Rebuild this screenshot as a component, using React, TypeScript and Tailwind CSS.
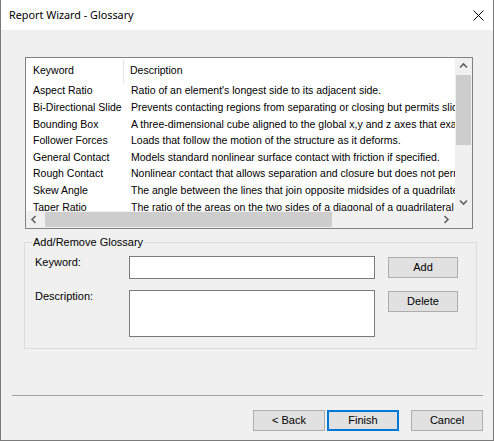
import React from "react";

const rows: [string, string][] = [
  ["Aspect Ratio", "Ratio of an element's longest side to its adjacent side."],
  ["Bi-Directional Slide", "Prevents contacting regions from separating or closing but permits sliding along the contact surface."],
  ["Bounding Box", "A three-dimensional cube aligned to the global x,y and z axes that exactly encloses the model."],
  ["Follower Forces", "Loads that follow the motion of the structure as it deforms."],
  ["General Contact", "Models standard nonlinear surface contact with friction if specified."],
  ["Rough Contact", "Nonlinear contact that allows separation and closure but does not permit sliding."],
  ["Skew Angle", "The angle between the lines that join opposite midsides of a quadrilateral element."],
  ["Taper Ratio", "The ratio of the areas on the two sides of a diagonal of a quadrilateral formed by the element."],
];

function Chevron({ dir }: { dir: "up" | "down" | "left" | "right" }) {
  const pts =
    dir === "up"
      ? "1,5.5 4.5,2 8,5.5"
      : dir === "down"
      ? "1,2.5 4.5,6 8,2.5"
      : dir === "left"
      ? "5.5,1 2,4.5 5.5,8"
      : "2.5,1 6,4.5 2.5,8";
  return (
    <svg width="9" height="9" viewBox="0 0 9 9">
      <polyline points={pts} fill="none" stroke="#606060" strokeWidth="1.6" />
    </svg>
  );
}

function Btn({ children, primary }: { children: React.ReactNode; primary?: boolean }) {
  return (
    <div
      className={
        "w-[72px] h-[21px] flex items-center justify-center bg-[#e1e1e1] text-black text-[11px] " +
        (primary ? "border-2 border-[#0078d7]" : "border border-[#adadad]")
      }
    >
      {children}
    </div>
  );
}

export default function App() {
  return (
    <div
      className="w-[494px] h-[441px] flex flex-col bg-[#f0f0f0] border-x border-b border-[#7a7a7a] overflow-hidden text-black"
      style={{ fontFamily: '"Liberation Sans", Arial, sans-serif' }}
    >
      <div className="h-[30px] shrink-0 bg-white flex items-center justify-between pl-[8px] pr-[9px]">
        <span className="text-[10.8px]" style={{ fontFamily: '"Noto Sans", sans-serif' }}>
          Report Wizard - Glossary
        </span>
        <svg width="11" height="11" viewBox="0 0 11 11">
          <path d="M0.5 0.5 L10.5 10.5 M10.5 0.5 L0.5 10.5" stroke="#000" strokeWidth="1" />
        </svg>
      </div>

      <div className="flex-1 flex flex-col">
        {/* List view */}
        <div className="mt-[27px] ml-[24px] w-[448px] h-[172px] border border-[#828282] bg-white flex flex-col">
          <div className="flex h-[153px]">
            <div className="w-[429px] overflow-hidden text-[10.5px] pt-[1px]">
              <div className="h-[24px] flex items-center">
                <div className="w-[98px] h-full flex items-center pl-[7px] border-r border-[#e5e5e5]">Keyword</div>
                <div className="pl-[6px]">Description</div>
              </div>
              {rows.map(([k, d]) => (
                <div key={k} className="h-[16.6px] flex items-center whitespace-nowrap">
                  <div className="w-[98px] shrink-0 pl-[7px] overflow-hidden">{k}</div>
                  <div className="pl-[7px]">{d}</div>
                </div>
              ))}
            </div>
            <div className="w-[17px] bg-[#f0f0f0] flex flex-col items-center">
              <div className="h-[17px] flex items-center justify-center">
                <Chevron dir="up" />
              </div>
              <div className="w-[15px] h-[70px] bg-[#cdcdcd]" />
              <div className="flex-1" />
              <div className="h-[17px] flex items-center justify-center">
                <Chevron dir="down" />
              </div>
            </div>
          </div>
          <div className="flex h-[17px]">
            <div className="w-[429px] bg-[#f0f0f0] flex items-center">
              <div className="w-[17px] h-full flex items-center justify-center">
                <Chevron dir="left" />
              </div>
              <div className="ml-[2px] w-[287px] h-[15px] bg-[#cdcdcd]" />
              <div className="flex-1" />
              <div className="w-[17px] h-full flex items-center justify-center">
                <Chevron dir="right" />
              </div>
            </div>
            <div className="w-[17px] bg-[#f0f0f0]" />
          </div>
        </div>

        {/* Group box */}
        <fieldset className="mt-[6px] ml-[23px] w-[453px] border border-[#dcdcdc] pb-[11px] text-[11px]">
          <legend className="ml-[7px] px-[1px] leading-[14px]">Add/Remove Glossary</legend>
          <div className="mt-[7px] pl-[10px] flex items-start">
            <div className="w-[94px] leading-[13px]">Keyword:</div>
            <div className="w-[246px] h-[23px] border border-[#7a7a7a] bg-white" />
            <div className="ml-[13px] mt-[1px]">
              <div className="w-[70px] h-[21px] flex items-center justify-center bg-[#e1e1e1] border border-[#adadad]">Add</div>
            </div>
          </div>
          <div className="mt-[11px] pl-[10px] flex items-start">
            <div className="w-[94px] leading-[13px]">Description:</div>
            <div className="w-[246px] h-[47px] border border-[#7a7a7a] bg-white" />
            <div className="ml-[13px] mt-[1px]">
              <div className="w-[70px] h-[21px] flex items-center justify-center bg-[#e1e1e1] border border-[#adadad]">Delete</div>
            </div>
          </div>
        </fieldset>

        <div className="mt-[46px] ml-[11px] w-[471px] border-t border-[#a0a0a0]" />

        <div className="mt-[14px] flex justify-end pr-[10px]">
          <Btn>&lt; Back</Btn>
          <div className="ml-[2px]">
            <Btn primary>Finish</Btn>
          </div>
          <div className="ml-[12px]">
            <Btn>Cancel</Btn>
          </div>
        </div>
      </div>
    </div>
  );
}
